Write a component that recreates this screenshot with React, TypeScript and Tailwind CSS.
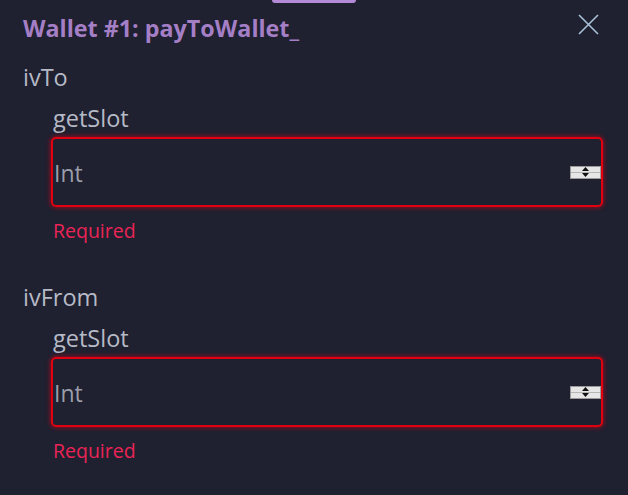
import { ReactNode } from "react";

function Spinner() {
  return (
    <div className="flex h-[13px] w-[31px] flex-col border border-[#9a9a9a] bg-[#e6e6e6]">
      <div className="flex flex-1 items-center justify-center border-b border-[#b5b5b5]">
        <svg width="7" height="4" viewBox="0 0 7 4">
          <path d="M3.5 0 L7 4 L0 4 Z" fill="#111" />
        </svg>
      </div>
      <div className="flex flex-1 items-center justify-center">
        <svg width="7" height="4" viewBox="0 0 7 4">
          <path d="M0 0 L7 0 L3.5 4 Z" fill="#111" />
        </svg>
      </div>
    </div>
  );
}

function Field({ label, children }: { label: string; children: ReactNode }) {
  return (
    <div className="flex flex-col">
      <div className="pl-[23px] text-[23.5px] leading-[30px] text-[#b6bac6]">{label}</div>
      <div className="pl-[51px] pr-[25px]">{children}</div>
    </div>
  );
}

function IntInput() {
  return (
    <div className="flex flex-col">
      <div className="pl-[2px] pt-[11px] text-[23.5px] leading-[30px] text-[#b6bac6]">getSlot</div>
      <div className="mt-[4px] flex h-[70px] items-center justify-between rounded-[5px] border-2 border-[#e00010] pl-[1px] shadow-[0_0_4px_1px_rgba(230,0,20,0.55)]">
        <span className="pt-[2px] text-[23px] text-[#9b9eaa]">Int</span>
        <Spinner />
      </div>
      <div className="pl-[2px] pt-[11px] text-[19.5px] leading-[26px] text-[#ea2456]">Required</div>
    </div>
  );
}

export default function App() {
  return (
    <div
      className="flex h-[495px] w-[628px] flex-col overflow-hidden bg-[#1f2030]"
      style={{ fontFamily: "'Open Sans', 'Noto Sans', sans-serif" }}
    >
      <div className="mx-auto h-[3px] w-[84px] rounded-b-full bg-[#b48ad6]" />
      <div className="mt-[10px] flex items-start justify-between pl-[23px] pr-[29px]">
        <h2 className="text-[23.3px] font-bold leading-[30px] text-[#a57fc6]">Wallet #1: payToWallet_</h2>
        <svg className="mt-[1px]" width="21" height="21" viewBox="0 0 21 21">
          <path d="M1 1 L20 20 M20 1 L1 20" stroke="#a9c1d9" strokeWidth="1.6" />
        </svg>
      </div>
      <div className="mt-[19px] flex flex-col gap-[38px]">
        <Field label="ivTo">
          <IntInput />
        </Field>
        <Field label="ivFrom">
          <IntInput />
        </Field>
      </div>
    </div>
  );
}
